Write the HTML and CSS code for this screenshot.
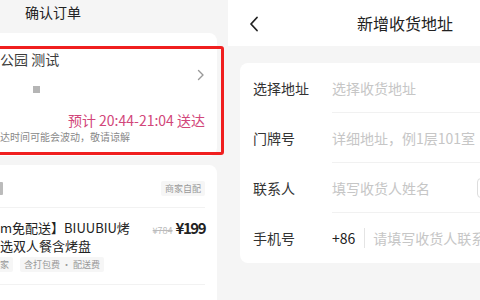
FILE: index.html
```html
<!DOCTYPE html>
<html lang="zh-CN">
<head>
    <meta charset="UTF-8">
    <meta name="viewport" content="width=device-width, initial-scale=1.0">
    <title>确认订单 / 新增收货地址</title>
    <link rel="stylesheet" href="styles.css">
</head>
<body>
    <div class="screens">
        <!-- 左侧：确认订单 -->
        <div class="panel order">
            <div class="order-header">确认订单</div>

            <div class="card address-card">
                <div class="address-row">
                    <div class="address-main">
                        <div class="address-name">公园 测试</div>
                        <div class="address-sub"><span class="dot"></span></div>
                    </div>
                    <svg class="chevron" width="8" height="12" viewBox="0 0 8 12">
                        <path d="M1.5 1.5 L6 6 L1.5 10.5" fill="none" stroke="#999" stroke-width="1.4" stroke-linecap="round" stroke-linejoin="round"/>
                    </svg>
                </div>
                <div class="eta">预计 20:44-21:04 送达</div>
                <div class="eta-note">达时间可能会波动，敬请谅解</div>
                <div class="highlight"></div>
            </div>

            <div class="card goods-card">
                <div class="goods-head">
                    <span class="goods-head-title"></span>
                    <span class="tag">商家自配</span>
                </div>
                <div class="goods-item">
                    <div class="goods-info">
                        <div class="goods-title">m免配送】BIUUBIU烤<br>选双人餐含烤盘</div>
                        <div class="goods-tags">
                            <span class="tag tag-cut">家</span>
                            <span class="tag">含打包费 · 配送费</span>
                        </div>
                    </div>
                    <div class="goods-price">
                        <span class="price-old">¥784</span>
                        <span class="price-now">¥199</span>
                    </div>
                </div>
            </div>
        </div>

        <!-- 右侧：新增收货地址 -->
        <div class="panel address">
            <div class="address-header">
                <svg class="back" width="10" height="16" viewBox="0 0 10 16">
                    <path d="M8 1.5 L2 8 L8 14.5" fill="none" stroke="#222" stroke-width="1.8" stroke-linecap="round" stroke-linejoin="round"/>
                </svg>
                <span class="address-title">新增收货地址</span>
            </div>

            <div class="form-card">
                <div class="form-row">
                    <span class="form-label">选择地址</span>
                    <div class="form-field"><span class="placeholder">选择收货地址</span></div>
                </div>
                <div class="form-row">
                    <span class="form-label">门牌号</span>
                    <div class="form-field"><span class="placeholder">详细地址，例1层101室</span></div>
                </div>
                <div class="form-row">
                    <span class="form-label">联系人</span>
                    <div class="form-field">
                        <span class="placeholder">填写收货人姓名</span>
                        <span class="gender-box"></span>
                    </div>
                </div>
                <div class="form-row">
                    <span class="form-label">手机号</span>
                    <div class="form-field no-line">
                        <span class="area-code">+86</span>
                        <span class="sep"></span>
                        <span class="placeholder">请填写收货人联系</span>
                    </div>
                </div>
            </div>
        </div>
    </div>
</body>
</html>
```

FILE: styles.css
```css
body {
    margin: 0;
    font-family: "Noto Sans CJK SC", "Noto Sans", sans-serif;
    background-color: #f5f5f5;
    color: #333;
}

.screens {
    display: flex;
    width: 480px;
    height: 300px;
    overflow: hidden;
}

.panel {
    height: 300px;
    overflow: hidden;
    background-color: #f5f5f5;
}

/* 左侧订单 */
.order {
    width: 228px;
    flex-shrink: 0;
}

.order-header {
    height: 33px;
    padding-left: 25px;
    font-size: 14px;
    line-height: 24px;
    color: #222;
    box-sizing: border-box;
}

.card {
    background-color: white;
    border-radius: 0 8px 8px 0;
    margin-right: 11px;
    padding-right: 12px;
}

.address-card {
    position: relative;
    padding-top: 16px;
    padding-bottom: 12px;
}

.address-row {
    display: flex;
    align-items: center;
}

.address-main {
    flex: 1;
}

.address-name {
    font-size: 14px;
    line-height: 20px;
    color: #3c3c3c;
}

.address-sub {
    margin-top: 10px;
    height: 20px;
    display: flex;
    align-items: center;
}

.dot {
    width: 7px;
    height: 7px;
    margin-left: 33px;
    background-color: #b5b5b5;
}

.chevron {
    margin-top: 2px;
}

.eta {
    margin-top: 12px;
    text-align: right;
    font-size: 14px;
    line-height: 18px;
    color: #d2467a;
}

.eta-note {
    margin-top: 1px;
    font-size: 10px;
    line-height: 14px;
    color: #888;
}

.highlight {
    position: absolute;
    left: -4px;
    top: 13px;
    width: 222px;
    height: 103px;
    border: 3px solid #f01f1f;
    border-radius: 3px;
}

.goods-card {
    margin-top: 9px;
    height: 140px;
    border-radius: 0 8px 0 0;
}

.goods-head {
    display: flex;
    justify-content: space-between;
    align-items: center;
    padding-top: 16px;
    padding-bottom: 11px;
    border-bottom: 1px solid #f2f2f2;
}

.goods-head-title {
    width: 3px;
    height: 13px;
    background-color: #bbb;
    border-radius: 0 1px 1px 0;
}

.tag {
    display: inline-block;
    padding: 0 4px;
    font-size: 9px;
    line-height: 15px;
    color: #999;
    background-color: #f6f6f6;
    border-radius: 2px;
}

.goods-item {
    display: flex;
    justify-content: space-between;
    padding-top: 11px;
    padding-bottom: 12px;
    border-bottom: 1px solid #f2f2f2;
}

.goods-title {
    font-size: 13px;
    line-height: 18px;
    color: #222;
}

.goods-tags {
    margin-top: 2px;
    display: flex;
    gap: 7px;
}

.tag-cut {
    margin-left: -4px;
}

.goods-price {
    display: flex;
    align-items: baseline;
    gap: 3px;
    line-height: 18px;
}

.price-old {
    font-size: 9px;
    color: #bbb;
    text-decoration: line-through;
}

.price-now {
    font-size: 15px;
    font-weight: bold;
    letter-spacing: -1.5px;
    color: #222;
}

/* 右侧新增地址 */
.address {
    flex: 1;
}

.address-header {
    height: 46px;
    background-color: white;
    display: flex;
    align-items: center;
    padding-left: 21px;
}

.back {
    margin-top: 2px;
}

.address-title {
    margin-left: 98px;
    font-size: 16px;
    color: #222;
    white-space: nowrap;
}

.form-card {
    width: 300px;
    margin-top: 17px;
    margin-left: 12px;
    padding-left: 13px;
    background-color: white;
    border-radius: 8px 0 0 8px;
}

.form-row {
    display: flex;
    height: 50px;
    align-items: stretch;
}

.form-label {
    width: 79px;
    flex-shrink: 0;
    font-size: 14px;
    line-height: 50px;
    color: #333;
}

.form-field {
    flex: 1;
    display: flex;
    align-items: center;
    border-bottom: 1px solid #f1f1f1;
    white-space: nowrap;
}

.form-field.no-line {
    border-bottom: none;
}

.placeholder {
    font-size: 14px;
    color: #c6c6c6;
}

.gender-box {
    width: 50px;
    height: 18px;
    margin-left: 47px;
    border: 1px solid #ddd;
    border-radius: 4px;
}

.area-code {
    font-size: 14px;
    color: #222;
}

.sep {
    width: 1px;
    height: 20px;
    margin: 0 8px 0 9px;
    background-color: #e4e4e4;
}
```
